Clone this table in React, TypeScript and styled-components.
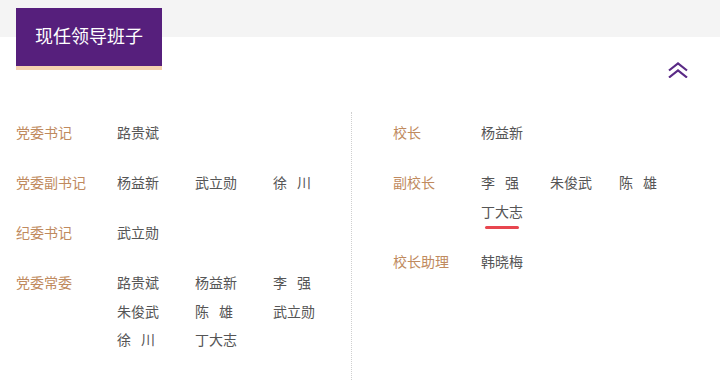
import React from 'react';
import styled, { createGlobalStyle } from 'styled-components';

interface IPost {
  title: string;
  names: string[];
  active?: string;
}

const partyPosts: IPost[] = [
  { title: '党委书记', names: ['路贵斌'] },
  { title: '党委副书记', names: ['杨益新', '武立勋', '徐 川'] },
  { title: '纪委书记', names: ['武立勋'] },
  {
    title: '党委常委',
    names: ['路贵斌', '杨益新', '李 强', '朱俊武', '陈 雄', '武立勋', '徐 川', '丁大志'],
  },
];

const schoolPosts: IPost[] = [
  { title: '校长', names: ['杨益新'] },
  { title: '副校长', names: ['李 强', '朱俊武', '陈 雄', '丁大志'], active: '丁大志' },
  { title: '校长助理', names: ['韩晓梅'] },
];

const GlobalStyle = createGlobalStyle`
  body {
    margin: 0;
    background: #fff;
    font-family: 'Liberation Sans', 'Noto Sans CJK SC', sans-serif;
  }
`;

const ChevronUp = () => (
  <svg width="20" height="16" viewBox="0 0 20 16" fill="none">
    <polyline points="1,8.5 10,1.5 19,8.5" stroke="#5a2a86" strokeWidth="2.2" />
    <polyline points="1,15.5 10,8.5 19,15.5" stroke="#5a2a86" strokeWidth="2.2" />
  </svg>
);

const PostList = ({ posts, labelWidth, cellWidth }: { posts: IPost[]; labelWidth: number; cellWidth: number }) => (
  <>
    {posts.map((post) => (
      <Row key={post.title}>
        <Label $width={labelWidth}>{post.title}</Label>
        <Names $width={cellWidth * 3}>
          {post.names.map((name, index) => (
            <Name key={index} $width={cellWidth}>
              <NameText $active={name === post.active}>{name}</NameText>
            </Name>
          ))}
        </Names>
      </Row>
    ))}
  </>
);

export default function App() {
  return (
    <>
      <GlobalStyle />
      <Page>
        <Header>
          <Tab>现任领导班子</Tab>
          <Toggle>
            <ChevronUp />
          </Toggle>
        </Header>
        <Body>
          <LeftColumn>
            <PostList posts={partyPosts} labelWidth={101} cellWidth={78} />
          </LeftColumn>
          <RightColumn>
            <PostList posts={schoolPosts} labelWidth={88} cellWidth={69} />
          </RightColumn>
        </Body>
      </Page>
    </>
  );
}

const Page = styled.div`
  width: 720px;
  height: 380px;
  overflow: hidden;
`;

const Header = styled.div`
  display: flex;
  justify-content: space-between;
  align-items: flex-start;
  padding: 8px 32px 0 16px;
  background: linear-gradient(#f4f4f4 37px, #fff 37px);
`;

const Tab = styled.div`
  width: 146px;
  height: 58px;
  line-height: 58px;
  text-align: center;
  background: #561f7c;
  border-bottom: 4px solid #f6d2b0;
  color: #fff;
  font-size: 18px;
`;

const Toggle = styled.div`
  margin-top: 54px;
  width: 20px;
  height: 16px;
  cursor: pointer;

  svg {
    display: block;
  }
`;

const Body = styled.div`
  display: flex;
  margin-top: 34px;
  height: 276px;
`;

const LeftColumn = styled.div`
  width: 335px;
  padding: 7px 0 0 16px;
  border-right: 1px dotted #cfcfcf;
  display: flex;
  flex-direction: column;
  gap: 21.5px;
`;

const RightColumn = styled.div`
  width: 295px;
  padding: 7px 0 0 41px;
  display: flex;
  flex-direction: column;
  gap: 21.5px;
`;

const Row = styled.div`
  display: flex;
  font-size: 14px;
  line-height: 28.5px;
`;

const Label = styled.div<{ $width: number }>`
  width: ${(p) => p.$width}px;
  flex-shrink: 0;
  color: #c08a5e;
`;

const Names = styled.div<{ $width: number }>`
  width: ${(p) => p.$width}px;
  display: flex;
  flex-wrap: wrap;
`;

const Name = styled.div<{ $width: number }>`
  width: ${(p) => p.$width}px;
  color: #555;
  white-space: pre;
  word-spacing: 6px;
`;

const NameText = styled.span<{ $active?: boolean }>`
  position: relative;
  display: inline-block;

  &::after {
    content: '';
    display: ${(p) => (p.$active ? 'block' : 'none')};
    position: absolute;
    left: 4px;
    right: 4px;
    top: 28px;
    height: 3px;
    border-radius: 2px;
    background: #e8464f;
  }
`;
